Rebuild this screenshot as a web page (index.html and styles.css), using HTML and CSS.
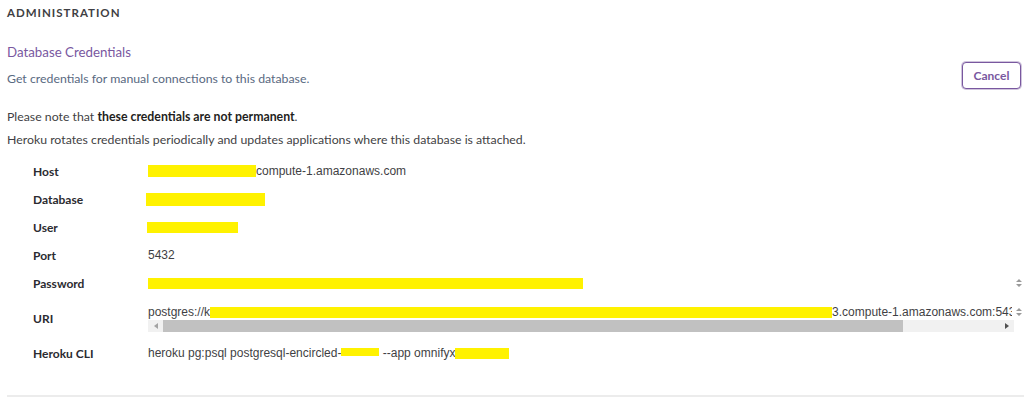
FILE: index.html
```html
<!DOCTYPE html>
<html>
<head>
    <meta charset="utf-8">
    <title>Database Credentials</title>
    <link rel="stylesheet" href="styles.css">
</head>
<body>
    <h4 class="section-head">Administration</h4>

    <div class="intro">
        <div>
            <h3 class="intro-title">Database Credentials</h3>
            <p class="intro-desc">Get credentials for manual connections to this database.</p>
        </div>
        <button type="button" class="btn-cancel">Cancel</button>
    </div>

    <p class="note">Please note that <b>these credentials are not permanent</b>.</p>
    <p class="note note-2">Heroku rotates credentials periodically and updates applications where this database is attached.</p>

    <!-- credentials list -->
    <div class="creds">
        <div class="cred-label">Host</div>
        <div class="cred-value"><span class="redact" style="width: 108px;"></span>compute-1.amazonaws.com</div>

        <div class="cred-label">Database</div>
        <div class="cred-value"><span class="redact redact-tall" style="width: 119px; margin-left: -2px;"></span></div>

        <div class="cred-label">User</div>
        <div class="cred-value"><span class="redact redact-short" style="width: 91px; margin-left: -1px;"></span></div>

        <div class="cred-label">Port</div>
        <div class="cred-value">5432</div>

        <div class="cred-label">Password</div>
        <div class="cred-value cred-box">
            <span class="box-text"><span class="redact redact-short" style="width: 435px;"></span></span>
            <svg class="spin" width="8" height="10" viewBox="0 0 8 10"><path d="M4 1 L7 4 H1 Z M4 9 L7 6 H1 Z" fill="#9a9a9a"/></svg>
        </div>

        <div class="cred-label">URI</div>
        <div class="cred-value cred-scroll">
            <div class="cred-box">
                <span class="box-text">postgres://k<span class="redact redact-short" style="width: 622px;"></span>3.compute-1.amazonaws.com:543</span>
                <svg class="spin" width="8" height="10" viewBox="0 0 8 10"><path d="M4 1 L7 4 H1 Z M4 9 L7 6 H1 Z" fill="#9a9a9a"/></svg>
            </div>
            <div class="hbar">
                <span class="hbar-arrow">
                    <svg width="4" height="6" viewBox="0 0 4 6"><path d="M4 0 V6 L0 3 Z" fill="#a3a3a3"/></svg>
                </span>
                <span class="hbar-thumb"></span>
                <span class="hbar-arrow hbar-right">
                    <svg width="4" height="6" viewBox="0 0 4 6"><path d="M0 0 V6 L4 3 Z" fill="#505050"/></svg>
                </span>
                <span class="hbar-corner"></span>
            </div>
        </div>

        <div class="cred-label">Heroku CLI</div>
        <div class="cred-value">heroku pg:psql postgresql-encircled-<span class="redact redact-top" style="width: 38px;"></span>&nbsp;--app omnifyx<span class="redact redact-short" style="width: 54px;"></span></div>
    </div>

    <div class="divider"></div>
</body>
</html>
```

FILE: styles.css
```css
/* Credentials panel */
body {
    margin: 0;
    padding: 0 0 0 7px;
    background-color: #fff;
    font-family: Lato, "Open Sans", sans-serif;
    color: #3f3f44;
}

h3, h4, p {
    margin: 0;
}

.section-head {
    padding-top: 6px;
    font-size: 11.5px;
    line-height: 14px;
    font-weight: 700;
    letter-spacing: 1px;
    text-transform: uppercase;
    color: #3f3f44;
}

.intro {
    display: flex;
    justify-content: space-between;
    align-items: flex-end;
    margin-top: 22px;
    padding-right: 3px;
}

.intro-title {
    font-size: 13.3px;
    line-height: 20px;
    font-weight: 400;
    color: #79589f;
}

.intro-desc {
    margin-top: 7px;
    font-size: 12.3px;
    line-height: 20px;
    color: #596981;
}

.btn-cancel {
    width: 59px;
    height: 27px;
    padding: 0;
    font-family: Lato, sans-serif;
    font-size: 12px;
    font-weight: 700;
    color: #79589f;
    background-color: #fff;
    border: 1px solid #79589f;
    border-radius: 4px;
    box-shadow: 0 0 0 1px rgba(121, 88, 159, 0.35);
    cursor: pointer;
}

.note {
    margin-top: 18px;
    font-size: 12.3px;
    line-height: 20px;
    color: #3f3f44;
}

.note b {
    color: #1f1f22;
}

.note-2 {
    margin-top: 3px;
}

.creds {
    display: grid;
    grid-template-columns: 115px minmax(0, 1fr);
    grid-template-rows: repeat(5, 28px) 42px 28px;
    align-items: center;
    margin-top: 7px;
    padding-left: 26px;
}

.cred-label {
    font-size: 12px;
    font-weight: 700;
    color: #2b2b30;
}

.cred-value {
    display: flex;
    align-items: center;
    min-width: 0;
    font-family: "Liberation Sans", Arial, sans-serif;
    font-size: 12px;
    color: #3f3f44;
    white-space: nowrap;
}

.cred-box {
    display: flex;
    align-items: center;
    min-width: 0;
}

.box-text {
    flex: 1;
    min-width: 0;
    overflow: hidden;
    white-space: nowrap;
    display: flex;
    align-items: center;
}

.spin {
    flex: none;
    margin: 0 1px 0 3px;
}

.redact {
    display: inline-block;
    flex: none;
    height: 12px;
    background-color: #fff200;
}

.redact-tall {
    height: 13px;
}

.redact-short {
    height: 11px;
}

.redact-top {
    height: 8px;
    align-self: flex-start;
    margin-top: 2px;
}

.cred-scroll {
    flex-direction: column;
    align-items: stretch;
    gap: 1px;
    padding-top: 1px;
}

.hbar {
    display: flex;
    height: 12px;
    background-color: #f1f1f1;
}

.hbar-arrow {
    display: flex;
    align-items: center;
    justify-content: center;
    width: 15px;
    flex: none;
}

.hbar-thumb {
    width: 740px;
    height: 12px;
    background-color: #c1c1c1;
}

.hbar-right {
    margin-left: auto;
}

.hbar-corner {
    width: 10px;
    background-color: #fff;
}

.divider {
    margin-top: 28px;
    height: 2px;
    background-color: #ececec;
}
```
